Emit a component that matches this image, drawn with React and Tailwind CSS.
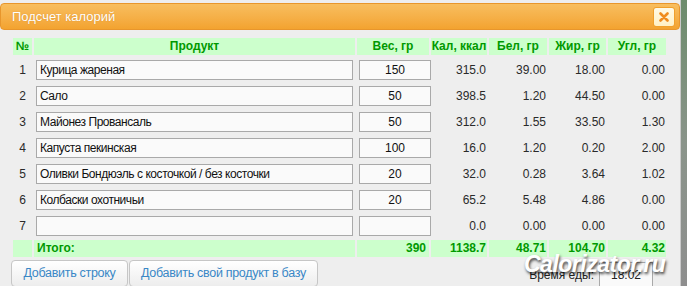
import React from 'react';

const rows = [
  { n: 1, name: 'Курица жареная', w: '150', kcal: '315.0', p: '39.00', f: '18.00', c: '0.00' },
  { n: 2, name: 'Сало', w: '50', kcal: '398.5', p: '1.20', f: '44.50', c: '0.00' },
  { n: 3, name: 'Майонез Провансаль', w: '50', kcal: '312.0', p: '1.55', f: '33.50', c: '1.30' },
  { n: 4, name: 'Капуста пекинская', w: '100', kcal: '16.0', p: '1.20', f: '0.20', c: '2.00' },
  { n: 5, name: 'Оливки Бондюэль с косточкой / без косточки', w: '20', kcal: '32.0', p: '0.28', f: '3.64', c: '1.02' },
  { n: 6, name: 'Колбаски охотничьи', w: '20', kcal: '65.2', p: '5.48', f: '4.86', c: '0.00' },
  { n: 7, name: '', w: '', kcal: '0.0', p: '0.00', f: '0.00', c: '0.00' },
];

const cols = 'grid grid-cols-[19px_321px_72px_56px_58px_57px_58px] gap-x-[2px]';
const head = 'bg-[#ccffcc] text-[#009900] font-bold text-center leading-[17px] h-[17px]';
const btn = 'h-[27px] px-0 whitespace-nowrap text-center rounded-[4px] border border-[#c6c6c6] bg-gradient-to-b from-white to-[#ededed] text-[#3987c6] text-[12.5px] tracking-[-0.3px]';

export default function App() {
  return (
    <div className="w-[687px] h-[286px] overflow-hidden flex bg-[#8c8c8c] font-['Liberation_Sans',sans-serif] text-[12px] text-[#2a2a2a]">
      {/* dialog */}
      <div className="w-[680px] h-full bg-[#eeeeee] pt-[3px] relative">
        <div className="h-[27px] rounded-[4px] border border-[#e8962c] bg-gradient-to-b from-[#f8be5e] to-[#f3a32f] flex items-center justify-between pl-[11px] pr-[4px]">
          <span className="text-white text-[13px] [text-shadow:0_0_1px_rgba(180,100,0,0.5)]">Подсчет калорий</span>
          <button className="w-[22px] h-[20px] rounded-[3px] border border-[#f0a02c] bg-gradient-to-b from-[#fffae6] to-[#fff0c4] flex items-center justify-center">
            <svg width="10" height="10" viewBox="0 0 10 10">
              <path d="M1.5 1.5 L8.5 8.5 M8.5 1.5 L1.5 8.5" stroke="#f08c1e" strokeWidth="2.6" strokeLinecap="round" />
            </svg>
          </button>
        </div>

        <div className="pl-[13px] pt-[8px]">
          <div className={cols}>
            <div className={head}>№</div>
            <div className={head}>Продукт</div>
            <div className={head}>Вес, гр</div>
            <div className={head}>Кал, ккал</div>
            <div className={head}>Бел, гр</div>
            <div className={head}>Жир, гр</div>
            <div className={head}>Угл, гр</div>
          </div>

          <div className="mt-[2px]">
            {rows.map((r) => (
              <div key={r.n} className={`${cols} h-[26px] items-center`}>
                <div className="text-center">{r.n}</div>
                <div className="pl-[2px]">
                  <div className="w-[317px] h-[20px] border border-[#a9a9a9] bg-[#fafafa] pl-[3px] leading-[18px] text-[#111] tracking-[-0.45px]">{r.name}</div>
                </div>
                <div className="pl-[2px]">
                  <div className="w-[72px] h-[20px] border border-[#a9a9a9] bg-[#fafafa] text-center leading-[18px] text-[#111]">{r.w}</div>
                </div>
                <div className="text-right pr-[1px]">{r.kcal}</div>
                <div className="text-right pr-[1px]">{r.p}</div>
                <div className="text-right pr-[1px]">{r.f}</div>
                <div className="text-right pr-[1px]">{r.c}</div>
              </div>
            ))}
          </div>

          <div className={`${cols} mt-[1px] text-[#009900] font-bold`}>
            <div className="bg-[#ccffcc] h-[17px]"></div>
            <div className="bg-[#ccffcc] h-[17px] leading-[17px] pl-[3px]">Итого:</div>
            <div className="bg-[#ccffcc] h-[17px] leading-[17px] text-right pr-[3px]">390</div>
            <div className="bg-[#ccffcc] h-[17px] leading-[17px] text-right pr-[1px]">1138.7</div>
            <div className="bg-[#ccffcc] h-[17px] leading-[17px] text-right pr-[1px]">48.71</div>
            <div className="bg-[#ccffcc] h-[17px] leading-[17px] text-right pr-[1px]">104.70</div>
            <div className="bg-[#ccffcc] h-[17px] leading-[17px] text-right pr-[1px]">4.32</div>
          </div>
        </div>

        <div className="flex items-start pl-[11px] pt-[3px]">
          <button className={`${btn} w-[117px]`}>Добавить строку</button>
          <button className={`${btn} ml-[1px] w-[189px]`}>Добавить свой продукт в базу</button>
          <div className="ml-auto mr-[27px] flex items-center mt-[2px]">
            <span className="text-[12px] text-[#222] mr-[5px]">Время еды:</span>
            <div className="w-[54px] h-[26px] border border-[#a9a9a9] bg-[#fafafa] pl-[11px] leading-[24px] text-[#222]">18:02</div>
          </div>
        </div>

        {/* watermark */}
        <div className="absolute left-[524px] top-[247px] text-white text-[23px] font-bold italic tracking-[-0.5px] [text-shadow:1px_2px_3px_rgba(0,0,0,0.75)] pointer-events-none">
          Calorizator.ru
        </div>
      </div>
      <div className="w-[1px] h-full bg-[#c9c9c9]"></div>
      <div className="flex-1 h-full bg-gradient-to-b from-[#6c8c6c] via-[#8a948a] to-[#8e8e8e]"></div>
    </div>
  );
}
